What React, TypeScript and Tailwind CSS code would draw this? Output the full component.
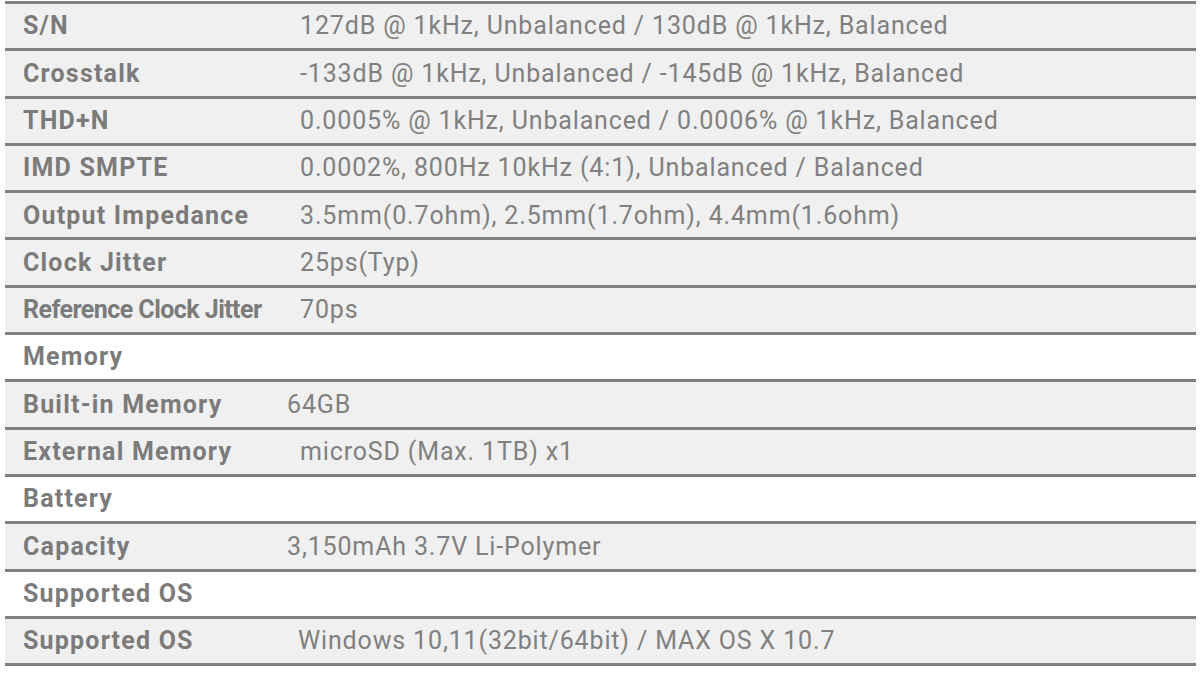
const rows: { label: string; value?: string; tight?: boolean; col?: string }[] = [
  { label: 'S/N', value: '127dB @ 1kHz, Unbalanced / 130dB @ 1kHz, Balanced' },
  { label: 'Crosstalk', value: '-133dB @ 1kHz, Unbalanced / -145dB @ 1kHz, Balanced' },
  { label: 'THD+N', value: '0.0005% @ 1kHz, Unbalanced / 0.0006% @ 1kHz, Balanced' },
  { label: 'IMD SMPTE', value: '0.0002%, 800Hz 10kHz (4:1), Unbalanced / Balanced' },
  { label: 'Output Impedance', value: '3.5mm(0.7ohm), 2.5mm(1.7ohm), 4.4mm(1.6ohm)' },
  { label: 'Clock Jitter', value: '25ps(Typ)' },
  { label: 'Reference Clock Jitter', value: '70ps', tight: true },
  { label: 'Memory' },
  { label: 'Built-in Memory', value: '64GB', col: 'w-[282px]' },
  { label: 'External Memory', value: 'microSD (Max. 1TB) x1' },
  { label: 'Battery' },
  { label: 'Capacity', value: '3,150mAh 3.7V Li-Polymer', col: 'w-[282px]' },
  { label: 'Supported OS' },
  { label: 'Supported OS', value: 'Windows 10,11(32bit/64bit) / MAX OS X 10.7', col: 'w-[293px]' },
];

const SpecRow = ({
  label,
  value,
  tight,
  col = 'w-[295px]',
}: {
  label: string;
  value?: string;
  tight?: boolean;
  col?: string;
}) => {
  const header = value === undefined;
  return (
    <div
      className={`flex items-center h-[47.3px] border-b-[3px] border-[#808080] ${
        header ? 'bg-white' : 'bg-[#f0f0f0]'
      }`}
    >
      <div
        className={`${col} shrink-0 pl-[18px] font-bold text-[25px] text-[#7b7b7b] whitespace-nowrap ${
          tight ? 'tracking-[-0.55px]' : 'tracking-[1.2px]'
        }`}
      >
        {label}
      </div>
      {!header && (
        <div className="flex-1 text-[25px] text-[#808080] whitespace-nowrap tracking-[0.85px]">{value}</div>
      )}
    </div>
  );
};

export default function App() {
  return (
    <div className="w-[1201px] h-[676px] bg-white pt-[1px] font-['Roboto',sans-serif]">
      <div className="mx-[5px] w-[1191px] border-t-[3px] border-[#808080]">
        {rows.map((r, i) => (
          <SpecRow key={i} {...r} />
        ))}
      </div>
    </div>
  );
}
